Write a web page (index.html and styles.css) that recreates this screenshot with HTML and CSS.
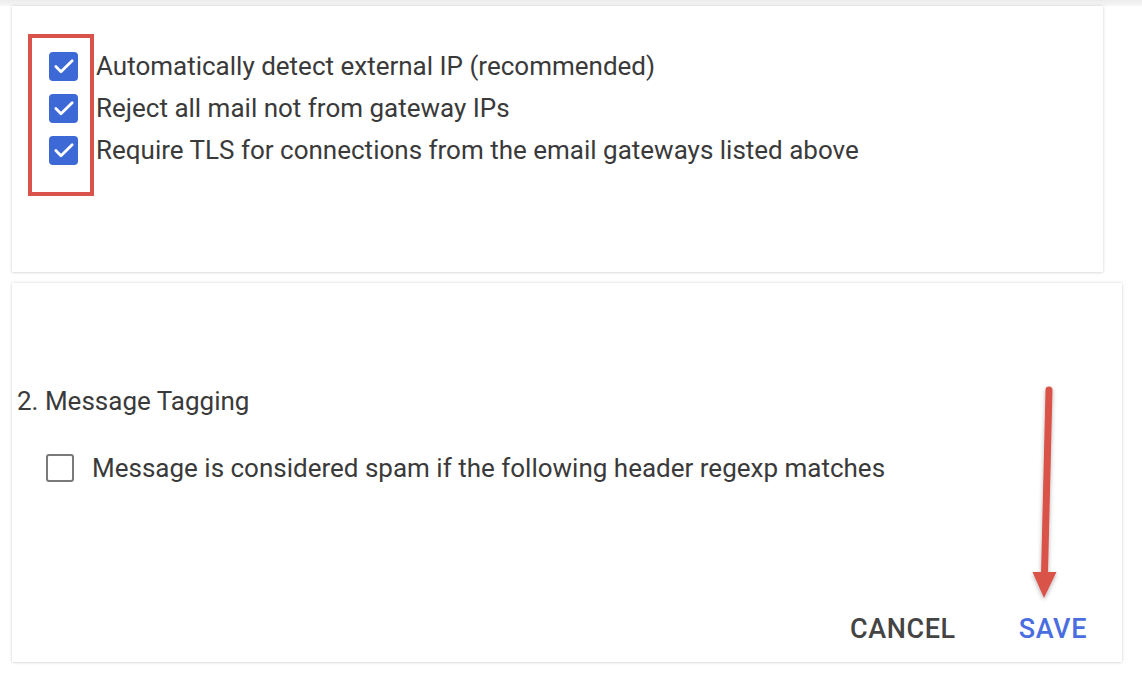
FILE: index.html
```html
<!DOCTYPE html>
<html lang="en">
<head>
<meta charset="utf-8">
<title>Gateway settings</title>
<link rel="stylesheet" href="styles.css">
</head>
<body>
<div class="page">
  <div class="top-fade"></div>
  <section class="card card-gateway">
    <ul class="checks">
      <li class="check-row">
        <span class="cb cb-on"><svg viewBox="0 0 24 24"><path d="M5 12.5l4.4 4.4L19 7.5" /></svg></span>
        <span class="label">Automatically detect external IP (recommended)</span>
      </li>
      <li class="check-row">
        <span class="cb cb-on"><svg viewBox="0 0 24 24"><path d="M5 12.5l4.4 4.4L19 7.5" /></svg></span>
        <span class="label">Reject all mail not from gateway IPs</span>
      </li>
      <li class="check-row">
        <span class="cb cb-on"><svg viewBox="0 0 24 24"><path d="M5 12.5l4.4 4.4L19 7.5" /></svg></span>
        <span class="label">Require TLS for connections from the email gateways listed above</span>
      </li>
    </ul>
    <div class="highlight-box"></div>
  </section>

  <section class="card card-tagging">
    <h2 class="section-title">2. Message Tagging</h2>
    <div class="check-row tag-row">
      <span class="cb cb-off"></span>
      <span class="label">Message is considered spam if the following header regexp matches</span>
    </div>
    <div class="actions">
      <button class="btn btn-cancel">Cancel</button>
      <button class="btn btn-save">Save</button>
    </div>
    <svg class="arrow" viewBox="0 0 40 230" width="40" height="230">
      <defs>
        <filter id="sh" x="-50%" y="-10%" width="200%" height="130%">
          <feDropShadow dx="0" dy="2" stdDeviation="2" flood-color="#000" flood-opacity="0.3"/>
        </filter>
      </defs>
      <g filter="url(#sh)">
        <path d="M21 6 L16.5 190" stroke="#d9534a" stroke-width="7" stroke-linecap="round" fill="none"/>
        <path d="M4.5 188 L28.5 188 L16 214 Z" fill="#d9534a"/>
      </g>
    </svg>
  </section>
</div>
</body>
</html>
```

FILE: styles.css
```css
* { box-sizing: border-box; }
html, body { margin: 0; padding: 0; background: #fff; }
body {
  font-family: Roboto, "Liberation Sans", Arial, sans-serif;
  color: #3a3a3a;
  width: 1142px;
  height: 686px;
  overflow: hidden;
}
.page {
  position: relative;
  display: flex;
  flex-direction: column;
  padding: 6px 0 0 12px;
  gap: 11px;
}
.top-fade {
  position: absolute;
  left: 0; top: 0; right: 0;
  height: 6px;
  background: linear-gradient(#ececec, #f7f7f7);
}
.card {
  position: relative;
  background: #fff;
  box-shadow: 0 0 3px rgba(0,0,0,0.16), 0 1px 2px rgba(0,0,0,0.06);
}
.card-gateway {
  width: 1091px;
  height: 266px;
  padding: 39px 0 0 37px;
}
.checks { list-style: none; margin: 0; padding: 0; }
.check-row {
  display: flex;
  align-items: center;
  height: 42px;
}
.cb {
  width: 29px;
  height: 29px;
  border-radius: 4px;
  flex: none;
  display: flex;
  align-items: center;
  justify-content: center;
}
.cb-on { background: #3d69d6; }
.cb-on svg { width: 28px; height: 28px; fill: none; stroke: #fff; stroke-width: 2.4; stroke-linecap: round; stroke-linejoin: round; }
.cb-off { border: 2.5px solid #7a7a7a; border-radius: 3px; width: 28px; height: 28px; }
.label {
  font-size: 26px;
  white-space: nowrap;
}
.card-gateway .label { margin-left: 18px; }
.highlight-box {
  position: absolute;
  left: 16px;
  top: 28px;
  width: 66px;
  height: 162px;
  border: 4px solid #d9534a;
}
.card-tagging {
  width: 1110px;
  height: 379px;
  padding: 102px 0 0 5px;
  display: flex;
  flex-direction: column;
}
.section-title {
  margin: 0;
  font-weight: 400;
  font-size: 26px;
  line-height: 32px;
}
.tag-row { margin: 30px 0 0 29px; }
.tag-row .label { margin-left: 18px; }
.actions {
  margin-top: auto;
  display: flex;
  justify-content: flex-end;
  gap: 47px;
  padding: 0 27px 13px 0;
}
.btn {
  font-family: Roboto, "Liberation Sans", Arial, sans-serif;
  font-size: 27px;
  font-weight: 500;
  text-transform: uppercase;
  background: none;
  border: 0;
  padding: 0 8px;
  line-height: 40px;
  letter-spacing: 0.6px;
}
.btn-cancel { color: #444; }
.btn-save { color: #4a6ddf; }
.arrow {
  position: absolute;
  left: 1016px;
  top: 101px;
}
```
